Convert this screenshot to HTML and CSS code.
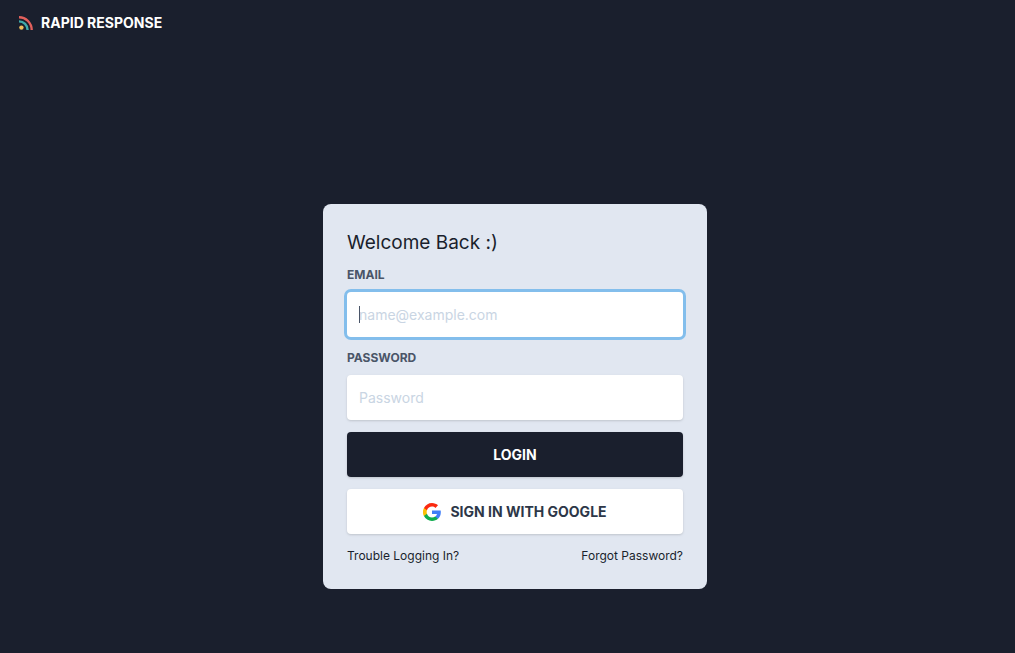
FILE: index.html
```html
<!DOCTYPE html>
<html lang="en">
<head>
<meta charset="utf-8">
<meta name="viewport" content="width=device-width, initial-scale=1">
<title>Rapid Response</title>
<link rel="stylesheet" href="styles.css">
</head>
<body>
<header class="site-header">
  <a class="brand" href="#">
    <svg class="brand-icon" viewBox="0 0 14 14" aria-hidden="true" fill="none" stroke-width="2.400">
      <path d="M0 1.300A12.700 12.700 0 0 1 12.700 14" stroke="#e3605c"/>
      <path d="M0 5.400A8.600 8.600 0 0 1 8.600 14" stroke="#3fa9ab"/>
      <circle cx="2.400" cy="11.600" r="2.200" fill="#f0bd5b"/>
    </svg>
    <span>RAPID RESPONSE</span>
  </a>
</header>
<main class="page">
  <form class="card">
    <h1 class="title">Welcome Back :)</h1>
    <div class="field">
      <label class="label" for="email">EMAIL</label>
      <div class="control">
        <input class="input" id="email" type="email" placeholder="name@example.com" autofocus>
        <span class="caret" aria-hidden="true"></span>
      </div>
    </div>
    <div class="field">
      <label class="label" for="password">PASSWORD</label>
      <input class="input" id="password" type="password" placeholder="Password">
    </div>
    <button class="button button-dark" type="submit">LOGIN</button>
    <button class="button button-light" type="button">
      <svg class="google" viewBox="0 0 48 48" aria-hidden="true">
        <path fill="#3f7ef8" d="M47.500 24.600c0-1.600-.2-3.200-.4-4.600H24v9h13.200c-.6 3-2.300 5.600-4.900 7.300v6h7.900c4.600-4.200 7.300-10.500 7.300-17.700z"/>
        <path fill="#0fac4e" d="M24 48c6.500 0 11.900-2.100 15.900-5.800l-7.700-6c-2.100 1.400-4.900 2.300-8.200 2.300-6.300 0-11.600-4.200-13.500-9.900H2.500v6.200C6.500 42.600 14.600 48 24 48z"/>
        <path fill="#fcc004" d="M10.500 28.600a14.500 14.500 0 0 1 0-9.200v-6.200h-8a24 24 0 0 0 0 21.600z"/>
        <path fill="#fb2a10" d="M24 9.500c3.500 0 6.700 1.200 9.200 3.600L40 6.200C35.900 2.400 30.500 0 24 0 14.600 0 6.500 5.400 2.500 13.200l8 6.200C12.400 13.700 17.700 9.500 24 9.500z"/>
      </svg>
      <span>SIGN IN WITH GOOGLE</span>
    </button>
    <nav class="links" aria-label="Account help">
      <a class="link" href="#">Trouble Logging In?</a>
      <a class="link" href="#">Forgot Password?</a>
    </nav>
  </form>
</main>
</body>
</html>
```
FILE: styles.css
```css
*,
*::before,
*::after {
  box-sizing: border-box;
}

body {
  margin: 0;
  min-height: 100vh;
  background: #1a1f2d;
  color: #1a1f2d;
  font-family: Inter, "Liberation Sans", sans-serif;
  font-size: 14px;
  line-height: 21px;
}

a {
  color: inherit;
  text-decoration: none;
}

.site-header {
  display: flex;
  padding: 12px 19px;
}

.brand {
  display: flex;
  align-items: center;
  gap: 8px;
  color: #fff;
  font-weight: 700;
}

.brand-icon {
  width: 14px;
  height: 14px;
}

.page {
  display: flex;
  justify-content: center;
  padding: 159px 8px 48px 23px;
}

.card {
  display: flex;
  flex-direction: column;
  gap: 12px;
  width: 100%;
  max-width: 384px;
  padding: 24px;
  border-radius: 8px;
  background: #e1e7f1;
}

.title {
  margin: 0 0 -4px;
  font-size: 19px;
  font-weight: 400;
  line-height: 30px;
}

.field {
  display: flex;
  flex-direction: column;
  gap: 8px;
}

.label {
  color: #4a5568;
  font-size: 12px;
  font-weight: 700;
  line-height: 18px;
}

.control {
  position: relative;
  display: flex;
}

.input,
.button {
  width: 100%;
  padding: 12px;
  border: 0;
  border-radius: 4px;
  box-shadow: 0 1px 3px rgba(0, 0, 0, 0.1), 0 1px 2px rgba(0, 0, 0, 0.06);
  font: inherit;
}

.input {
  height: 45px;
  background: #fff;
  color: #4a5568;
  caret-color: transparent;
}

.input::placeholder {
  color: #c9d5e3;
  opacity: 1;
}

.input:focus {
  outline: none;
  box-shadow: 0 0 0 3px #83beec;
}

/* Text cursor shown in the focused field */
.caret {
  position: absolute;
  top: 14px;
  left: 12px;
  width: 1px;
  height: 17px;
  background: #4a5568;
}

.button {
  display: flex;
  align-items: center;
  justify-content: center;
  gap: 9px;
  font-weight: 700;
  cursor: pointer;
}

.button-dark {
  background: #1a1f2d;
  color: #fff;
}

.button-light {
  background: #fff;
  color: #2d3748;
}

.google {
  width: 18px;
  height: 18px;
}

.links {
  display: flex;
  justify-content: space-between;
  font-size: 12px;
  line-height: 19px;
}
```
